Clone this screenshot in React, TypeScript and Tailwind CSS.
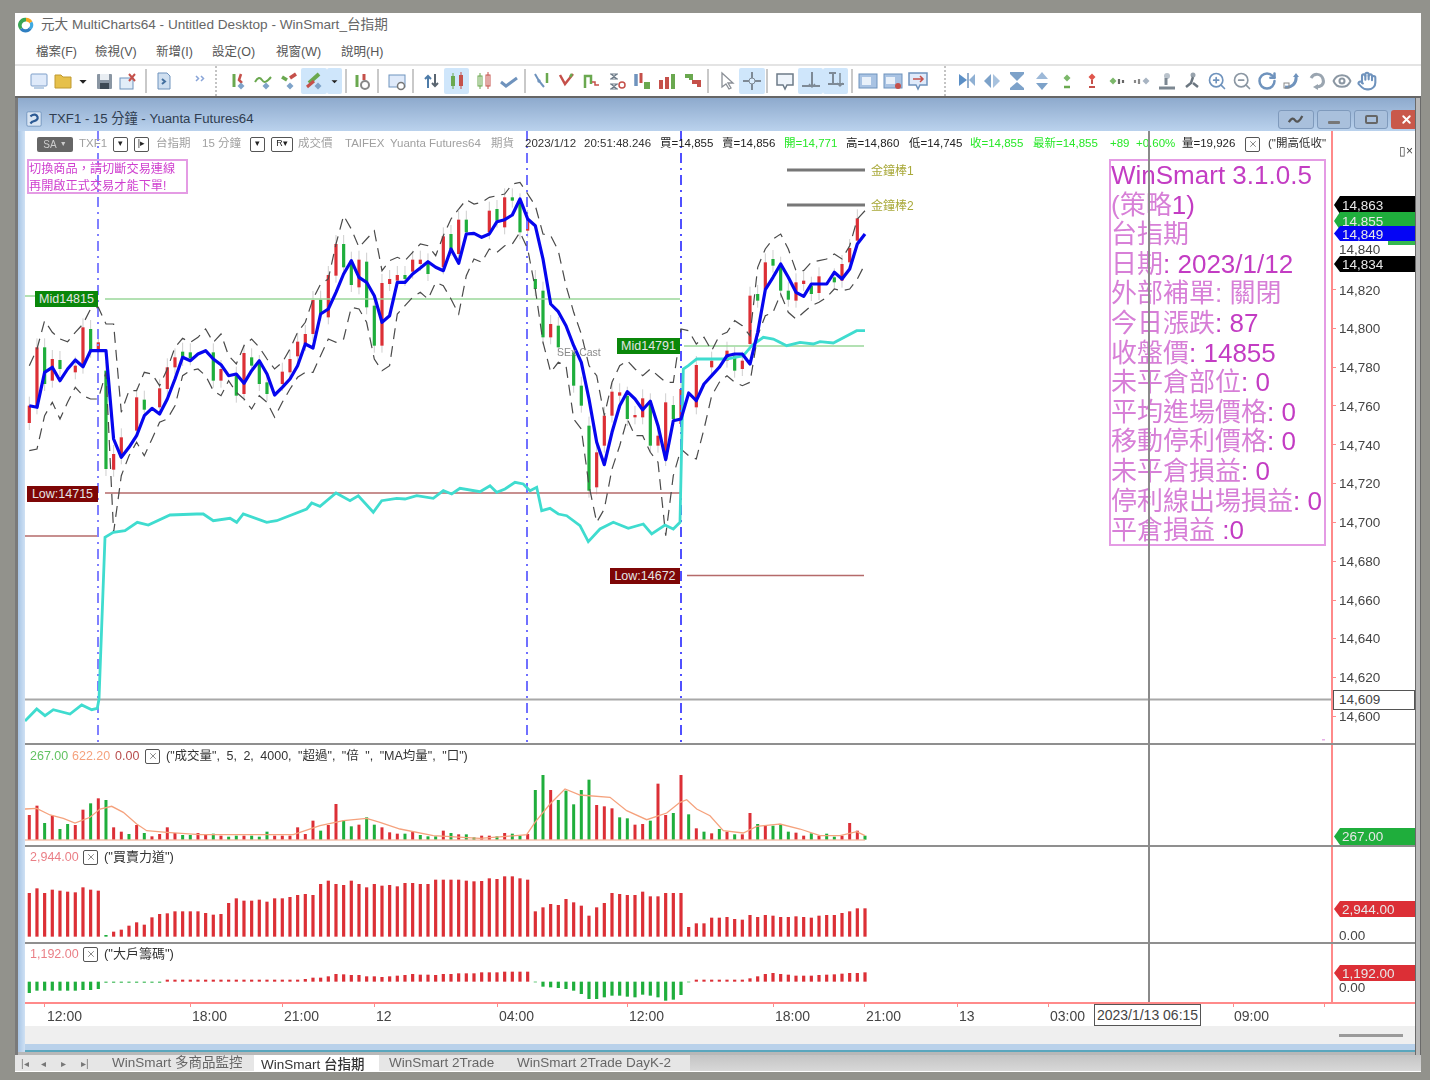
import React from "react";
import { Hand, Eye, RotateCw, ZoomIn, ZoomOut, X } from "lucide-react";

const RED = "#dc2f36";
const GREEN = "#1fae3c";
const BLUEGREY = "#6f93bd";

// bar x in page pixels
const bx = (i: number) => 29.3 + i * 7.667;
// values below were read off the 3x crops of the reference
const fromA = (z: number) => 200 + z / 3;
const fromB = (z: number) => 170 + z / 3;
const fromVol = (z: number) => 690 + z / 3;

const blueA = [620, 625, 520, 505, 545, 510, 483, 503, 455, 455, 455, 720, 775, 745, 710, 650, 628, 645, 600, 540, 475, 485, 465, 455, 480, 497, 530, 525, 553, 515, 485, 525, 588, 565, 540, 500, 435, 447, 345, 330, 280, 225, 185, 235, 250, 290, 370, 350, 250, 250, 225, 207, 188, 205, 215, 150, 193, 105, 103];
const blueB = [205, 195, 158, 152, 138, 90, 150, 170, 270, 405, 428, 470, 530, 580, 690, 820, 887, 790, 710, 668, 690, 722, 697, 770, 872, 755, 750, 672, 695, 645, 620, 595, 560, 555, 555, 585, 490, 362, 325, 285, 325, 370, 382, 345, 345, 345, 310, 330, 300, 225, 195];
const upA = [500, 450, 365, 400, 420, 428, 400, 375, 330, 325, 375, 375, 640, 575, 575, 520, 525, 560, 510, 445, 418, 430, 415, 390, 430, 405, 470, 495, 440, 420, 445, 480, 510, 490, 450, 400, 370, 300, 255, 240, 135, 50, 90, 145, 120, 95, 215, 185, 175, 185, 160, 135, 140, 170, 110, 60, 30, 2, 15];
const upB = [100, 85, 80, 75, 45, 40, 75, 110, 195, 200, 245, 350, 430, 495, 590, 620, 740, 640, 590, 575, 600, 620, 600, 620, 640, 640, 480, 485, 525, 505, 545, 500, 490, 455, 470, 500, 295, 240, 210, 195, 240, 305, 305, 280, 275, 270, 255, 270, 230, 150, 125];
const lowA = [755, 750, 650, 610, 660, 610, 565, 590, 600, 600, 520, 1000, 830, 770, 730, 770, 720, 670, 660, 620, 530, 515, 510, 530, 575, 590, 545, 580, 600, 630, 590, 610, 655, 610, 570, 535, 520, 520, 470, 420, 430, 420, 325, 330, 370, 480, 515, 500, 345, 320, 295, 280, 300, 250, 260, 300, 345, 230, 180];
const lowB = [280, 240, 250, 230, 225, 190, 240, 360, 520, 610, 580, 590, 750, 780, 950, 1060, 1020, 900, 830, 750, 800, 800, 850, 880, 1100, 920, 840, 860, 870, 780, 680, 640, 620, 640, 650, 640, 500, 440, 430, 375, 430, 450, 430, 410, 400, 385, 360, 365, 360, 330, 285];

const series = (a: number[], b: number[]) =>
  [...a.map((z, i) => `${bx(i).toFixed(1)},${fromA(z).toFixed(1)}`), ...b.map((z, i) => `${bx(i + 59).toFixed(1)},${fromB(z).toFixed(1)}`)].join(" ");

const cyan = [
  [25, 722], [36.7, 710], [45, 716.7], [53.3, 710.7], [70, 715], [81.7, 706], [91.7, 710.7], [97.3, 709.3], [99, 700], [105, 538.3],
  [113.3, 533.3], [125, 531.7], [137.3, 523.3], [148.3, 526], [170, 516], [196.7, 515], [203.3, 515], [213.3, 521.7], [230, 519.3], [236.7, 523.3], [243.3, 515], [266.7, 523.3], [276.7, 521.7], [306.7, 510], [311.7, 504], [320, 507.3], [336, 494], [350, 501.7], [358.3, 496.7], [373.3, 513.3], [381.7, 501.7], [396.7, 499.3], [405, 500], [416.7, 496.7], [433.3, 499.3], [443.3, 491.7], [451.7, 495], [460, 489.3], [480, 492.7],
  [490, 486.7], [496.7, 493.3], [505, 490], [515, 483.3], [523.3, 485], [530, 491.7], [536.7, 488.3], [541.7, 511.7], [550, 509.3], [558.3, 515], [566.7, 516.7], [580, 526.7], [588.3, 542.7], [600, 530], [613.3, 523.3], [628.3, 529.3], [643.3, 525], [651.7, 535], [665, 526], [673.3, 530], [680, 523.3], [683.3, 370], [688.3, 366.7], [696.7, 360], [726.7, 360], [743.3, 356.7], [751.7, 346.7], [763.3, 338.3], [773.3, 340], [786.7, 346.7], [800, 343.3], [813.3, 345], [820, 342.7], [833.3, 344], [856.7, 331.7], [865, 331.7],
].map((p) => p.join(",")).join(" ");

// candles: index, body top, body bottom, green?  (crop units)
const candlesA: [number, number, number, 0 | 1][] = [
  [0, 620, 672, 0], [1, 445, 625, 0], [2, 445, 555, 1], [3, 480, 545, 0], [4, 483, 510, 1], [6, 500, 520, 0], [7, 385, 503, 0], [8, 390, 455, 1], [9, 430, 455, 0], [10, 515, 810, 1], [11, 765, 812, 0], [12, 715, 775, 0], [14, 595, 695, 0], [15, 602, 632, 1], [17, 568, 625, 0], [18, 505, 570, 0], [19, 475, 505, 0], [20, 458, 480, 1], [21, 460, 478, 1], [24, 460, 545, 1], [25, 510, 545, 0], [27, 530, 590, 1], [28, 462, 585, 0], [29, 475, 500, 1], [30, 495, 555, 1], [31, 550, 585, 1], [33, 518, 555, 0], [34, 480, 520, 0], [35, 428, 472, 0], [36, 405, 435, 0], [37, 303, 405, 0], [38, 302, 345, 1], [39, 228, 355, 0], [40, 135, 230, 0], [41, 135, 205, 1], [42, 185, 258, 1], [43, 182, 265, 0], [44, 188, 325, 1], [45, 320, 440, 1], [46, 252, 440, 0], [47, 240, 255, 0], [48, 228, 245, 0], [49, 228, 240, 1], [50, 182, 218, 0], [51, 182, 195, 0], [52, 190, 225, 1], [54, 112, 205, 0], [55, 105, 150, 1], [56, 62, 165, 0], [57, 62, 100, 1],
];
const candlesB: [number, number, number, 0 | 1][] = [
  [60, 125, 190, 0], [61, 120, 155, 1], [62, 85, 175, 0], [63, 85, 95, 1], [64, 100, 190, 1], [65, 150, 185, 0], [66, 330, 360, 1], [67, 365, 505, 1], [68, 465, 505, 0], [69, 470, 535, 1], [71, 550, 650, 1], [72, 650, 710, 1], [73, 770, 965, 1], [74, 850, 955, 0], [75, 740, 830, 0], [76, 668, 740, 0], [77, 670, 680, 0], [78, 680, 750, 1], [79, 738, 745, 0], [80, 688, 745, 0], [81, 700, 830, 1], [82, 800, 830, 0], [83, 700, 870, 0], [84, 708, 750, 1], [85, 660, 765, 0], [87, 588, 715, 0], [89, 575, 595, 0], [91, 545, 575, 0], [92, 560, 605, 1], [93, 575, 600, 0], [94, 380, 525, 0], [95, 375, 395, 1], [96, 280, 360, 0], [97, 270, 290, 1], [98, 290, 365, 1], [99, 365, 392, 1], [100, 340, 395, 0], [101, 335, 345, 0], [102, 350, 375, 1], [103, 322, 372, 0], [105, 325, 340, 1], [106, 285, 335, 0], [107, 237, 280, 0], [108, 148, 215, 0],
];
const allCandles = [
  ...candlesA.map(([i, t, b, g]) => ({ i, t: fromA(t), b: fromA(b), g })),
  ...candlesB.map(([i, t, b, g]) => ({ i, t: fromB(t), b: fromB(b), g })),
];

const volColors = "rrgrggrrgrgrrgrgrrrrggrrgrggrgggrrrrrrgrrggrggrrrgrgggrgrggrrgrggrggrgggggrrrggrrgrrgrgrgrgrgrrgrgggrrgrggrrrg";
const volTop = [378, 350, 402, 380, 420, 405, 408, 362, 343, 328, 333, 415, 428, 435, 408, 432, 442, 435, 415, 432, 438, 438, 432, 435, 434, 440, 443, 440, 440, 440, 443, 428, 440, 440, 440, 415, 435, 395, 425, 408, 345, 395, 412, 407, 385, 407, 415, 430, 434, 434, 428, 438, 442, 442, 425, 432, 436, 436, 445, 440, 440, 442, 432, 434, 440, 435, 303, 258, 303, 333, 305, 346, 303, 272, 348, 352, 358, 385, 388, 407, 405, 395, 284, 378, 372, 258, 376, 418, 428, 433, 420, 428, 436, 436, 372, 405, 408, 410, 405, 428, 431, 440, 433, 440, 434, 443, 440, 402, 425, 440];
const volMa = "75,360 110,358 150,378 190,388 225,402 270,385 300,360 335,352 370,370 410,405 440,425 500,430 600,437 800,437 880,437 960,410 1030,395 1100,388 1140,400 1200,420 1300,440 1440,448 1580,437 1605,400 1650,345 1695,300 1740,318 1830,325 1880,365 1940,392 2000,372 2040,340 2060,332 2090,360 2130,380 2170,425 2230,432 2270,412 2340,405 2400,420 2460,440 2520,440 2570,428 2595,440"
  .split(" ").map((p) => { const [x, y] = p.split(",").map(Number); return `${(x / 3).toFixed(1)},${fromVol(y).toFixed(1)}`; }).join(" ");
const forceTop = [612, 598, 612, 602, 605, 608, 610, 595, 602, 605, 738, 728, 722, 710, 700, 707, 685, 675, 673, 667, 667, 667, 667, 672, 677, 675, 642, 628, 635, 635, 632, 638, 628, 628, 624, 618, 615, 618, 585, 575, 585, 588, 575, 585, 595, 585, 590, 588, 592, 582, 582, 585, 585, 572, 572, 572, 572, 575, 577, 576, 568, 570, 562, 562, 568, 572, 667, 655, 645, 648, 630, 640, 650, 680, 655, 642, 612, 615, 618, 618, 608, 622, 622, 612, 612, 612, 714, 703, 703, 686, 686, 684, 690, 692, 678, 684, 678, 680, 684, 684, 682, 684, 686, 680, 678, 678, 672, 667, 658, 658];
const bigHand = [912, 905, 905, 905, 905, 905, 905, 903, 903, 900, 881, 881, 881, 881, 881, 881, 881, 881, 872, 872, 872, 872, 872, 872, 872, 872, 872, 872, 872, 872, 872, 872, 872, 872, 872, 872, 870, 866, 866, 862, 855, 856, 858, 858, 862, 862, 864, 862, 860, 858, 855, 857, 857, 858, 855, 855, 853, 853, 853, 850, 850, 850, 848, 848, 848, 848, 880, 893, 895, 897, 900, 905, 915, 930, 930, 925, 920, 920, 923, 925, 917, 920, 925, 935, 932, 918, 880, 872, 872, 872, 872, 872, 872, 872, 868, 862, 855, 852, 855, 857, 860, 860, 860, 858, 857, 856, 854, 852, 852, 850];

const Ico = ({ children }: { children: React.ReactNode }) => (
  <svg viewBox="0 0 20 20" className="w-5 h-5 block" fill="none">{children}</svg>
);
const Diamond = ({ x, y, c = "#7fa3c9" }: { x: number; y: number; c?: string }) => (
  <path d={`M${x} ${y - 3.5}l3.5 3.5-3.5 3.5-3.5-3.5z`} fill={c} />
);
const S = (p: { d: string; c: string; w?: number; f?: string }) => (
  <path d={p.d} stroke={p.c} strokeWidth={p.w ?? 1.5} fill={p.f ?? "none"} />
);
const R = "#c5504a";
const G = "#6aa84f";
const B = BLUEGREY;
const D = "#6d7b88";

const icons: Record<string, React.ReactNode> = {
  win: <><rect x="2" y="3" width="16" height="12" rx="1" fill="#dfeafa" stroke="#7e9fc9" /><S d="M5 17h10" c="#a5bfdd" /></>,
  folder: <path d="M2 4h6l2 2h8v11H2z" fill="#e6c04a" stroke="#c09a30" />,
  caret: <path d="M6 9h8l-4 4z" fill="#222" />,
  save: <><rect x="3" y="3" width="15" height="15" rx="1" fill="#8a96a3" /><rect x="6" y="3" width="9" height="6" fill="#e8edf2" /><rect x="6" y="12" width="9" height="6" fill="#3d4954" /></>,
  exportx: <><rect x="2" y="7" width="13" height="11" fill="#e2edf8" stroke={B} /><S d="M11 3l6 7M17 3l-6 7" c={R} w={2} /></>,
  script: <><path d="M4 2h9l3 3v13H4z" fill="#cfdff0" stroke={B} /><S d="M8 8l3 2.5-3 2.5" c="#45709f" w={2} /></>,
  more: <><S d="M4 5l2.5 2.5L4 10M9 5l2.5 2.5L9 10" c="#8aa5d8" /></>,
  c1: <><S d="M6 3v13" c={G} w={3} /><S d="M13 3l-2 6 3 3" c={R} w={2.5} /><Diamond x={13} y={15} /></>,
  c2: <><S d="M1 11c3-5 5-5 7-2s4 3 9-3" c={G} w={2} /><Diamond x={12} y={15} /></>,
  c3: <><S d="M3 6l5 3" c={G} w={3.5} /><S d="M11 7l6-4" c={R} w={3.5} /><Diamond x={11} y={15} /></>,
  c4: <><S d="M5 12L15 3" c={G} w={4} /><S d="M3 16l7-6" c={R} w={3} /><Diamond x={14} y={15} /></>,
  c5: <><S d="M5 4v12" c={G} w={3} /><S d="M12 3v6" c={R} w={3} /><circle cx="13" cy="14" r="4" stroke="#888" strokeWidth="2" /></>,
  wingear: <><rect x="2" y="4" width="16" height="12" fill="#dfeafa" stroke={B} /><circle cx="14" cy="15" r="3.5" fill="#fff" stroke="#777" strokeWidth="1.5" /></>,
  arrows: <><S d="M6 17V5M3 8l3-3 3 3" c="#4d7ba8" w={2} /><S d="M13 3v12M10 12l3 3 3-3" c="#5a6570" w={2} /></>,
  candles: <><rect x="4" y="5" width="4" height="10" fill={G} /><S d="M6 2v16" c={G} w={1} /><rect x="12" y="4" width="4" height="11" fill={R} /><S d="M14 1v17" c={R} w={1} /></>,
  hollow: <><rect x="4" y="5" width="4" height="10" stroke={G} /><S d="M6 2v16" c={G} w={1} /><rect x="12" y="4" width="4" height="11" stroke={R} /><S d="M14 1v17" c={R} w={1} /></>,
  check: <S d="M2 11l5 4 11-8" c={B} w={3} />,
  v1: <><S d="M3 3l4 7 5 6" c={B} w={2} /><S d="M15 2v10" c={G} w={2.5} /><circle cx="7" cy="10" r="1.7" fill={B} /></>,
  v2: <><S d="M3 4l5 9 8-10" c={R} w={2.5} /><S d="M15 3l-2 3" c={G} w={2.5} /></>,
  steps: <><S d="M3 17V5h6v8" c={G} w={2.5} /><S d="M10 11h3v3h4" c={R} w={1.5} /></>,
  boxes: <><S d="M3 3h8M3 8h8M3 13h8M3 18h8M4 3l6 5M10 3L4 8M4 13l6 5M10 13l-6 5" c={D} w={1.2} /><circle cx="15" cy="14" r="3" stroke={R} strokeWidth="1.5" /></>,
  mix: <><S d="M4 3v12" c={B} w={3.5} /><S d="M9 2v10" c={R} w={3} /><rect x="12" y="11" width="6" height="7" fill={G} /></>,
  blocks: <><rect x="2" y="9" width="4" height="9" fill={R} /><rect x="8" y="6" width="4" height="12" fill={R} /><rect x="14" y="3" width="4" height="15" fill={G} /></>,
  diag: <><S d="M3 5h6v4" c={G} w={4} /><S d="M10 11h7v5" c={R} w={4} /></>,
  cursor: <path d="M6 2v14l4-3 3 5 2-1-3-5h5z" fill="#fff" stroke="#8a8f96" strokeWidth="1.3" />,
  cross: <><S d="M10 1v18M1 10h18" c="#7e8a96" w={2} /><circle cx="10" cy="10" r="3" fill="#dbeeff" stroke="#7e8a96" /></>,
  bubble: <path d="M2 3h16v11h-6l-2 4-2-4H2z" fill="#eef4fb" stroke={D} strokeWidth="1.5" />,
  tdown: <><S d="M11 1v15M1 15h18" c="#7e8a96" w={2} /><S d="M8 13l3 3 3-3" c="#7e8a96" /></>,
  tdown2: <><S d="M3 2h7M7 2v10M2 13h16" c="#7e8a96" w={2} /><S d="M14 2v13M11 12l3 3 3-3" c="#7e8a96" /></>,
  wb1: <><rect x="1" y="3" width="18" height="14" fill="#a9c3e3" stroke={B} /><rect x="4" y="6" width="9" height="8" fill="#e9f1fa" /></>,
  wb2: <><rect x="1" y="3" width="18" height="14" fill="#a9c3e3" stroke={B} /><rect x="3" y="6" width="9" height="7" fill="#e9f1fa" /><circle cx="15" cy="15" r="3" fill={R} /></>,
  wb3: <><path d="M1 2h18v12h-7l-2 4-2-4H1z" fill="#dfeafa" stroke={B} strokeWidth="1.5" /><S d="M5 8h10M12 5l3 3-3 3" c={R} /></>,
  n1: <><path d="M2 3l8 6-8 6z" fill="#5b8fc6" /><S d="M11 2v15" c="#6f93bd" /><path d="M18 3l-6 6 6 6z" fill="#8fb0d3" /></>,
  n2: <><path d="M9 3L2 10l7 7z" fill="#7da2c9" /><path d="M11 3l7 7-7 7z" fill="#a8c2de" /></>,
  n3: <><path d="M3 1h14v2l-7 7-7-7z" fill="#7da2c9" /><path d="M3 19h14v-2l-7-6-7 6z" fill="#7da2c9" /></>,
  n4: <><path d="M10 1l6 7H4z" fill="#9db9d8" /><path d="M10 19l6-7H4z" fill="#7da2c9" /></>,
  n5: <><Diamond x={10} y={7} c="#7cb86a" /><S d="M7 16h6" c={G} w={2.5} /></>,
  n6: <><Diamond x={10} y={6} c="#e0564c" /><S d="M10 9v4M7 16h6" c={R} w={2} /></>,
  n7: <><Diamond x={6} y={10} c="#7cb86a" /><S d="M12 8v5M16 9v3" c="#666" w={2.2} /></>,
  n8: <><S d="M3 9v3M7 8v5" c="#888" w={2.2} /><Diamond x={14} y={10} c="#a8b4c2" /></>,
  f1: <><circle cx="10" cy="5" r="3" fill="#b9c2cb" /><S d="M9 7v7M2 17h16" c="#7c8791" w={3} /></>,
  f2: <><circle cx="11" cy="4" r="2.5" fill="#98a3ad" /><S d="M11 6l-2 6-5 4M11 12l5 4" c="#6b7680" w={2.5} /></>,
  f3: <><S d="M3 16c6 1 12-3 11-11" c="#6f93bd" w={3} /><path d="M11 6l3-4 3 4z" fill="#6f93bd" /><rect x="2" y="12" width="5" height="5" stroke="#888" /></>,
  f4: <><S d="M4 7c3-5 10-5 12 1s-3 8-7 8" c="#9aa5b0" w={3} /><path d="M11 13v6l-5-3z" fill="#9aa5b0" /></>,
};

type Tool = { k?: string; cls: string; on?: boolean; sep?: boolean };
const leftTools: Tool[] = [
  { k: "win", cls: "w-[26px]" }, { k: "folder", cls: "w-[22px]" }, { k: "caret", cls: "w-[18px]" }, { k: "save", cls: "w-[24px]" }, { k: "exportx", cls: "w-[24px]" },
  { sep: true, cls: "ml-[5px] mr-[5px]" }, { k: "script", cls: "w-[24px]" }, { k: "more", cls: "ml-[14px] w-[24px]" },
];
const midTools: Tool[] = [
  { k: "c1", cls: "w-[25px]" }, { k: "c2", cls: "w-[27px]" }, { k: "c3", cls: "w-[23px]" },
  { k: "c4", cls: "w-[26px] ml-[1px]", on: true }, { k: "caret", cls: "w-[15px]", on: true },
  { sep: true, cls: "mx-[3px]" }, { k: "c5", cls: "w-[24px]" }, { sep: true, cls: "ml-[3px] mr-[6px]" }, { k: "wingear", cls: "w-[24px]" }, { sep: true, cls: "mx-[3px]" },
  { k: "arrows", cls: "w-[24px] ml-[3px]" }, { k: "candles", cls: "w-[25px]", on: true }, { k: "hollow", cls: "w-[26px] ml-[2px]" }, { k: "check", cls: "w-[24px]" }, { sep: true, cls: "mx-[3px]" },
  { k: "v1", cls: "w-[25px]" }, { k: "v2", cls: "w-[25px]" }, { k: "steps", cls: "w-[25px]" }, { k: "boxes", cls: "w-[25px]" }, { k: "mix", cls: "w-[25px]" }, { k: "blocks", cls: "w-[25px]" }, { k: "diag", cls: "w-[25px]" },
  { sep: true, cls: "mx-[3px]" }, { k: "cursor", cls: "w-[27px]" }, { k: "cross", cls: "w-[26px]", on: true },
  { sep: true, cls: "ml-[1px] mr-[3px]" }, { k: "bubble", cls: "w-[27px]" }, { k: "tdown", cls: "w-[25px]", on: true }, { k: "tdown2", cls: "w-[25px]", on: true },
  { sep: true, cls: "mx-[3px]" }, { k: "wb1", cls: "w-[24px]" }, { k: "wb2", cls: "w-[26px]" }, { k: "wb3", cls: "w-[24px]" },
];
const rightTools = ["n1", "n2", "n3", "n4", "n5", "n6", "n7", "n8", "f1", "f2"];

function ToolRow({ items }: { items: Tool[] }) {
  return (
    <>
      {items.map((t, i) =>
        t.sep ? (
          <span key={i} className={`w-[2px] h-[24px] bg-[#c9c9c9] ${t.cls}`} />
        ) : (
          <span key={i} className={`h-[26px] flex items-center justify-center rounded-[2px] ${t.cls} ${t.on ? "bg-[#cfe6fb]" : ""}`}>
            <Ico>{icons[t.k as string]}</Ico>
          </span>
        )
      )}
    </>
  );
}

const statusTail: { t: string; w: string; c: string }[] = [
  { t: "成交價", w: "w-[47px]", c: "text-[#a0a0a0]" },
  { t: "TAIFEX", w: "w-[45px]", c: "text-[#a0a0a0]" },
  { t: "Yuanta Futures64", w: "w-[101px]", c: "text-[#a0a0a0]" },
  { t: "期貨", w: "w-[34px]", c: "text-[#a0a0a0]" },
  { t: "2023/1/12", w: "w-[59px]", c: "text-[#333]" },
  { t: "20:51:48.246", w: "w-[76px]", c: "text-[#333]" },
  { t: "買=14,855", w: "w-[62px]", c: "text-[#222]" },
  { t: "賣=14,856", w: "w-[62px]", c: "text-[#222]" },
  { t: "開=14,771", w: "w-[62px]", c: "text-[#28e828]" },
  { t: "高=14,860", w: "w-[63px]", c: "text-[#222]" },
  { t: "低=14,745", w: "w-[61px]", c: "text-[#222]" },
  { t: "收=14,855", w: "w-[63px]", c: "text-[#28e828]" },
  { t: "最新=14,855", w: "w-[77px]", c: "text-[#28e828]" },
  { t: "+89", w: "w-[26px]", c: "text-[#28e828]" },
  { t: "+0.60%", w: "w-[46px]", c: "text-[#28e828]" },
  { t: "量=19,926", w: "w-[63px]", c: "text-[#222]" },
];

const CloseBox = () => (
  <span className="w-[15px] h-[15px] flex items-center justify-center border border-[#555] rounded-[2px] shrink-0">
    <X className="w-[10px] h-[10px] text-[#444]" strokeWidth={1.5} />
  </span>
);
const MiniBtn = ({ label, cls }: { label: string; cls: string }) => (
  <span className={`h-[15px] flex items-center justify-center border border-[#555] rounded-[2px] text-[9px] text-[#222] shrink-0 ${cls}`}>{label}</span>
);

// CJK part is drawn thin in the reference, the numbers come out stronger
const info: [string, string][] = [
  ["", "WinSmart 3.1.0.5"], ["(策略", "1)"], ["台指期", ""], ["日期", ": 2023/1/12"], ["外部補單: 關閉", ""], ["今日漲跌", ": 87"], ["收盤價", ": 14855"],
  ["未平倉部位", ": 0"], ["平均進場價格", ": 0"], ["移動停利價格", ": 0"], ["未平倉損益", ": 0"], ["停利線出場損益", ": 0"], ["平倉損益", " :0"],
];

const prices = ["14,820", "14,800", "14,780", "14,760", "14,740", "14,720", "14,700", "14,680", "14,660", "14,640", "14,620", "14,600"];

const timeLabels: { t: string; x: number }[] = [
  { t: "12:00", x: 47 }, { t: "18:00", x: 192 }, { t: "21:00", x: 284 }, { t: "12", x: 376 }, { t: "04:00", x: 499 }, { t: "12:00", x: 629 },
  { t: "18:00", x: 775 }, { t: "21:00", x: 866 }, { t: "13", x: 959 }, { t: "03:00", x: 1050 }, { t: "09:00", x: 1234 },
];
const timeTicks = [44, 190, 282, 374, 497, 627, 773, 864, 957, 1048, 1233, 1324];

const Tag = ({ label, cls }: { label: string; cls: string }) => (
  <div className={`absolute left-[1px] right-0 flex items-center pl-[8px] pt-[2px] text-[13.5px] text-[#e8e8e8] overflow-hidden [clip-path:polygon(0_50%,6px_0,100%_0,100%_100%,6px_100%)] ${cls}`}>{label}</div>
);
const PlotTag = ({ label, cls }: { label: string; cls: string }) => (
  <div className={`absolute h-[16px] flex items-center justify-center text-[12.5px] leading-none text-[#e5e5e5] ${cls}`}>{label}</div>
);

export default function App() {
  return (
    <div className="w-[1430px] h-[1080px] bg-[#92928c] pt-[13px] pl-[15px] overflow-hidden [font-family:'Liberation_Sans','Noto_Sans_CJK_TC',sans-serif]">
      <div className="w-[1406px] h-[1059px] flex flex-col bg-white blur-[0.6px]">
        {/* app title */}
        <div className="h-[24px] flex items-center pl-[2px] gap-[6px] shrink-0">
          <svg viewBox="0 0 20 20" className="w-[18px] h-[18px]">
            <path d="M10 2a8 8 0 0 1 7 4l-3 2a4.500 4.500 0 0 0-4-2z" fill="#f5a623" />
            <path d="M17 6a8 8 0 0 1-1 9l-3-2a4 4 0 0 0 1-5z" fill="#3fa9e0" />
            <path d="M16 15a8 8 0 0 1-13 0l3-2a4.500 4.500 0 0 0 7 0z" fill="#2f7fc1" />
            <path d="M3 15A8 8 0 0 1 10 2v4a4.500 4.500 0 0 0-4 7z" fill="#3aa655" />
          </svg>
          <span className="text-[13.6px] text-[#666]">元大 MultiCharts64 - Untitled Desktop - WinSmart_台指期</span>
        </div>
        {/* menu */}
        <div className="h-[27px] flex items-center pl-[21px] pt-[3px] text-[12.5px] text-[#555] shrink-0">
          <span className="w-[59px]">檔案(F)</span>
          <span className="w-[61px]">檢視(V)</span>
          <span className="w-[56px]">新增(I)</span>
          <span className="w-[64px]">設定(O)</span>
          <span className="w-[65px]">視窗(W)</span>
          <span>說明(H)</span>
        </div>
        {/* toolbars */}
        <div className="h-[32px] flex items-center border-t-2 border-[#e4e4e4] pl-[11px] shrink-0">
          <ToolRow items={leftTools} />
          <span className="w-[2px] h-[30px] ml-[1px] mr-[8px] border-l-2 border-dotted border-[#c4c4c4]" />
          <ToolRow items={midTools} />
          <span className="w-[2px] h-[30px] ml-[14px] mr-[8px] border-l-2 border-dotted border-[#c4c4c4]" />
          {rightTools.map((k) => (
            <span key={k} className="w-[25px] h-[26px] flex items-center justify-center"><Ico>{icons[k]}</Ico></span>
          ))}
          <span className="w-[25px] h-[26px] flex items-center justify-center"><ZoomIn className="w-5 h-5 text-[#6f93bd]" /></span>
          <span className="w-[25px] h-[26px] flex items-center justify-center"><ZoomOut className="w-5 h-5 text-[#8b97a3]" /></span>
          <span className="w-[25px] h-[26px] flex items-center justify-center"><RotateCw className="w-5 h-5 text-[#6f93bd]" strokeWidth={3} /></span>
          <span className="w-[25px] h-[26px] flex items-center justify-center"><Ico>{icons.f3}</Ico></span>
          <span className="w-[25px] h-[26px] flex items-center justify-center"><Ico>{icons.f4}</Ico></span>
          <span className="w-[25px] h-[26px] flex items-center justify-center"><Eye className="w-5 h-5 text-[#8b97a3]" strokeWidth={2.5} /></span>
          <span className="w-[25px] h-[26px] flex items-center justify-center"><Hand className="w-5 h-5 text-[#6f93bd]" strokeWidth={2.5} /></span>
        </div>
        <div className="h-[2px] bg-[#666] shrink-0" />

        {/* MDI area */}
        <div className="flex h-[957px] shrink-0 bg-[#b0b0b0]">
          <div className="w-[3px] bg-[#7a7a7a]" />
          <div className="w-[1397px] flex flex-col">
            {/* child window title */}
            <div className="h-[33px] shrink-0 flex items-center pl-[7px] pt-[9px] bg-gradient-to-b from-[#8eaacd] to-[#bad2ed]">
              <svg viewBox="0 0 20 20" className="w-[18px] h-[18px] mr-[6px]">
                <rect x="2" y="2" width="16" height="16" rx="1.500" fill="#d9e5f3" stroke="#6f93bd" />
                <path d="M6 7c4-3 7-2 8 1s-3 4-6 5l-2 2" stroke="#2c5a94" strokeWidth="2.500" fill="none" />
              </svg>
              <span className="text-[13.2px] text-[#2f3d50]">TXF1 - 15 分鐘 - Yuanta Futures64</span>
              <div className="ml-auto flex gap-[3px] h-[19px]">
                <span className="w-[36px] flex items-center justify-center rounded-[3px] border border-[#7f9abc] bg-[#a9c0dc]">
                  <svg viewBox="0 0 20 12" className="w-[18px] h-[11px]"><path d="M2 9c3-5 5-5 7-2s5 1 8-5" stroke="#555" strokeWidth="2.500" fill="none" /></svg>
                </span>
                <span className="w-[34px] flex items-end justify-center pb-[4px] rounded-[3px] border border-[#7f9abc] bg-[#a9c0dc]"><span className="w-[12px] h-[3px] bg-[#777] rounded-[1px]" /></span>
                <span className="w-[34px] flex items-center justify-center rounded-[3px] border border-[#7f9abc] bg-[#a9c0dc]"><span className="w-[13px] h-[9px] border-2 border-[#666] rounded-[2px]" /></span>
                <span className="w-[24px] flex items-center justify-end pr-[2px] rounded-l-[3px] bg-[#c9584a]"><X className="w-[13px] h-[13px] text-white" strokeWidth={3.5} /></span>
              </div>
            </div>
            <div className="flex h-[921px] shrink-0">
              <div className="w-[7px] bg-gradient-to-r from-[#a9c6e6] to-[#cfe1f4]" />
              <div className="w-[1390px] flex flex-col bg-white relative">
                {/* crosshair vertical */}
                <div className="absolute left-[1123px] top-0 w-[2px] h-[871px] bg-[#8a8a8a] z-20" />

                {/* main pane */}
                <div className="flex h-[612px] shrink-0">
                  <div className="relative w-[1306px] h-full overflow-hidden">
                    <svg viewBox="25 132 1306 612" className="block w-full h-full">
                      {allCandles.map((c) => (
                        <g key={c.i}>
                          <line x1={bx(c.i)} x2={bx(c.i)} y1={c.t - 9} y2={c.b + 7} stroke="#cfcfcf" strokeWidth="1" />
                          <rect x={bx(c.i) - 1.6} y={c.t} width="3.200" height={c.b - c.t} fill={c.g ? GREEN : RED} />
                        </g>
                      ))}
                      <line x1="25" x2="35" y1="297" y2="297" stroke="#9ad79a" strokeWidth="1.500" />
                      <line x1="105" x2="680" y1="300" y2="300" stroke="#9ad79a" strokeWidth="1.500" />
                      <line x1="684" x2="864" y1="347" y2="347" stroke="#9ad79a" strokeWidth="1.500" />
                      <line x1="105" x2="680" y1="494" y2="494" stroke="#b56a6a" strokeWidth="1.500" />
                      <line x1="25" x2="98" y1="537" y2="537" stroke="#b56a6a" strokeWidth="1.500" />
                      <line x1="687" x2="864" y1="576.500" y2="576.500" stroke="#b56a6a" strokeWidth="1.500" />
                      <line x1="25" x2="1331" y1="700.500" y2="700.500" stroke="#a8a8a8" strokeWidth="2" />
                      <line x1="98" x2="98" y1="132" y2="744" stroke="#8080ff" strokeWidth="2" strokeDasharray="10 5 2 5" />
                      <line x1="527" x2="527" y1="132" y2="744" stroke="#7070ff" strokeWidth="2" strokeDasharray="10 5 2 5" />
                      <line x1="681" x2="681" y1="132" y2="744" stroke="#5050ff" strokeWidth="2" strokeDasharray="10 5 2 5" />
                      <line x1="787" x2="865" y1="171" y2="171" stroke="#777" strokeWidth="3" />
                      <line x1="787" x2="865" y1="206" y2="206" stroke="#777" strokeWidth="3" />
                      <polyline points={series(upA, upB)} fill="none" stroke="#4a4a4a" strokeWidth="1.200" strokeDasharray="11 7" />
                      <polyline points={series(lowA, lowB)} fill="none" stroke="#4a4a4a" strokeWidth="1.200" strokeDasharray="11 7" />
                      <polyline points={cyan} fill="none" stroke="#3fdccf" strokeWidth="2.800" />
                      <polyline points={series(blueA, blueB)} fill="none" stroke="#0606ee" strokeWidth="3.200" strokeLinejoin="round" />
                      <rect x="1322" y="740" width="3" height="1.500" fill="#e8b0e8" />
                    </svg>

                    {/* legend row */}
                    <div className="absolute top-[1px] left-0 w-full h-[24px] flex items-center pl-[12px] text-[11.5px] whitespace-nowrap overflow-hidden">
                      <span className="w-[36px] h-[15px] shrink-0 flex items-center justify-center gap-[3px] bg-[#666] rounded-[2px] text-[10px] text-[#ccc]">SA<span className="text-[7px]">▼</span></span>
                      <span className="w-[34px] ml-[6px] shrink-0 text-[#a0a0a0]">TXF1</span>
                      <MiniBtn label="▾" cls="w-[15px]" />
                      <MiniBtn label="|▸" cls="w-[15px] ml-[6px]" />
                      <span className="w-[46px] ml-[7px] shrink-0 text-[#a0a0a0]">台指期</span>
                      <span className="w-[48px] shrink-0 text-[#a0a0a0]">15 分鐘</span>
                      <MiniBtn label="▾" cls="w-[15px]" />
                      <MiniBtn label="R▾" cls="w-[22px] ml-[6px] mr-[5px]" />
                      {statusTail.map((s) => <span key={s.t} className={`${s.w} shrink-0 ${s.c}`}>{s.t}</span>)}
                      <CloseBox />
                      <span className="ml-[8px] text-[#333]">("開高低收"</span>
                    </div>

                    {/* warning box */}
                    <div className="absolute left-[2px] top-[28px] w-[161px] h-[35px] border-2 border-[#e49be4] text-[12.2px] leading-[17px] text-[#cf3fcf] whitespace-nowrap overflow-hidden">
                      <div>切換商品，請切斷交易連線</div>
                      <div>再開啟正式交易才能下單!</div>
                    </div>

                    <PlotTag label="Mid14815" cls="left-[10px] top-[160px] w-[63px] bg-[#0a870a]" />
                    <PlotTag label="Low:14715" cls="left-[2px] top-[355px] w-[71px] bg-[#7e0606]" />
                    <PlotTag label="Mid14791" cls="left-[592px] top-[207px] w-[63px] bg-[#0a870a]" />
                    <PlotTag label="Low:14672" cls="left-[585px] top-[437px] w-[70px] bg-[#7e0606]" />
                    <span className="absolute left-[532px] top-[214px] text-[10.5px] text-[#8a8a8a]">SEx Cast</span>
                    <span className="absolute left-[846px] top-[31px] text-[12px] text-[#a9a93a]">金鐘棒1</span>
                    <span className="absolute left-[846px] top-[66px] text-[12px] text-[#a9a93a]">金鐘棒2</span>

                    {/* info panel */}
                    <div className="absolute left-[1084px] top-[28px] w-[217px] h-[387px] border-2 border-[#e49be4] text-[26px] leading-[29.6px] text-[#c33cc3] whitespace-nowrap overflow-hidden">
                      {info.map(([cjk, rest]) => (
                        <div key={cjk + rest}><span className="text-[#d77fd7]">{cjk}</span>{rest}</div>
                      ))}
                    </div>
                  </div>

                  {/* price scale */}
                  <div className="relative w-[84px] h-full border-l-2 border-[#ff8a8a] text-[#444] text-[13.5px] leading-none">
                    <span className="absolute left-[66px] top-[14px] text-[12px] text-[#444]">▯×</span>
                    <span className="absolute left-[55px] top-[110px] w-[27px] h-[4px] bg-[#35b84f]" />
                    <Tag label="14,863" cls="top-[65px] h-[18px] bg-black" />
                    <Tag label="14,855" cls="top-[81px] h-[18px] bg-[#1fae3c]" />
                    <Tag label="14,849" cls="top-[95px] h-[15px] bg-[#0505f5]" />
                    <span className="absolute left-[6px] top-[112px]">14,840</span>
                    <Tag label="14,834" cls="top-[125px] h-[16px] bg-black" />
                    {prices.map((p, i) => (
                      <span key={p} className="absolute left-[6px]" style={{ top: 152.5 + i * 38.75 }}>{p}</span>
                    ))}
                    {prices.map((p, i) => (
                      <span key={p} className="absolute left-0 w-[3px] h-[1px] bg-[#ff8a8a]" style={{ top: 158 + i * 38.82 }} />
                    ))}
                    <div className="absolute left-0 right-0 top-[559px] h-[20px] border border-[#555] bg-white pl-[5px] flex items-center">14,609</div>
                  </div>
                </div>
                <div className="h-[2px] bg-[#8f8f8f] shrink-0" />

                {/* volume pane */}
                <div className="flex h-[100px] shrink-0">
                  <div className="relative w-[1306px] h-full">
                    <svg viewBox="25 746 1306 100" className="block w-full h-full">
                      {volTop.map((z, i) => (
                        <rect key={i} x={bx(i) - 1.500} y={fromVol(z)} width="3" height={(452 - z) / 3} fill={volColors[i] === "g" ? GREEN : RED} />
                      ))}
                      <polyline points={volMa} fill="none" stroke="#f5a27d" strokeWidth="1.300" />
                      <line x1="25" x2="865" y1="841" y2="841" stroke="#f0a080" strokeWidth="1" />
                    </svg>
                    <div className="absolute top-[1px] left-[5px] h-[20px] flex items-center text-[12.5px] whitespace-nowrap">
                      <span className="w-[36px] text-[#62c262]">267.00</span>
                      <span className="w-[36px] ml-[6px] text-[#f5a27d]">622.20</span>
                      <span className="ml-[7px] w-[23px] text-[#b84c4c]">0.00</span>
                      <span className="ml-[7px]"><CloseBox /></span>
                      <span className="ml-[6px] text-[#333] [word-spacing:3px]">("成交量", 5, 2, 4000, "超過", "倍 ", "MA均量", "口")</span>
                    </div>
                  </div>
                  <div className="relative w-[84px] h-full border-l-2 border-[#ff8a8a] overflow-hidden">
                    <Tag label="267.00" cls="top-[83px] h-[17px] bg-[#1fae3c]" />
                  </div>
                </div>
                <div className="h-[2px] bg-[#8f8f8f] shrink-0" />

                {/* buy/sell pane */}
                <div className="flex h-[95px] shrink-0">
                  <div className="relative w-[1306px] h-full">
                    <svg viewBox="25 848 1306 95" className="block w-full h-full">
                      {forceTop.map((z, i) => (
                        <rect key={i} x={bx(i) - 1.600} y={fromVol(z)} width="3.200" height={(743 - z) / 3} fill={i === 10 ? GREEN : RED} />
                      ))}
                    </svg>
                    <div className="absolute top-0 left-[5px] h-[20px] flex items-center text-[12.5px] whitespace-nowrap">
                      <span className="w-[46px] text-[#ea7f86]">2,944.00</span>
                      <span className="ml-[7px]"><CloseBox /></span>
                      <span className="ml-[6px] text-[#333] text-[13px]">("買賣力道")</span>
                    </div>
                  </div>
                  <div className="relative w-[84px] h-full border-l-2 border-[#ff8a8a] overflow-hidden text-[13.5px] leading-none text-[#444]">
                    <Tag label="2,944.00" cls="top-[54px] h-[16px] bg-[#dc2f36]" />
                    <span className="absolute left-[6px] top-[82px]">0.00</span>
                  </div>
                </div>
                <div className="h-[2px] bg-[#8f8f8f] shrink-0" />

                {/* big hands pane */}
                <div className="flex h-[58px] shrink-0">
                  <div className="relative w-[1306px] h-full">
                    <svg viewBox="25 945 1306 58" className="block w-full h-full">
                      {bigHand.map((z, i) => (
                        <rect key={i} x={bx(i) - 1.600} y={fromVol(Math.min(z, 878))} width="3.200" height={Math.abs(z - 878) / 3} fill={z > 878 ? GREEN : RED} />
                      ))}
                    </svg>
                    <div className="absolute top-0 left-[5px] h-[20px] flex items-center text-[12.5px] whitespace-nowrap">
                      <span className="w-[46px] text-[#ea7f86]">1,192.00</span>
                      <span className="ml-[7px]"><CloseBox /></span>
                      <span className="ml-[6px] text-[#333] text-[13px]">("大戶籌碼")</span>
                    </div>
                  </div>
                  <div className="relative w-[84px] h-full border-l-2 border-[#ff8a8a] overflow-hidden text-[13.5px] leading-none text-[#444]">
                    <Tag label="1,192.00" cls="top-[21px] h-[16px] bg-[#dc2f36]" />
                    <span className="absolute left-[6px] top-[37px]">0.00</span>
                  </div>
                </div>

                {/* time axis */}
                <div className="relative h-[24px] shrink-0 border-t-2 border-[#ff8a8a] text-[14px] text-[#444] leading-none">
                  {timeLabels.map((l) => (
                    <span key={l.t + l.x} className="absolute top-[5px]" style={{ left: l.x - 25 }}>{l.t}</span>
                  ))}
                  {timeTicks.map((x) => (
                    <span key={x} className="absolute top-0 w-[1px] h-[3px] bg-[#ff8a8a]" style={{ left: x - 25 }} />
                  ))}
                  <span className="absolute left-[1069px] top-0 w-[107px] h-[22px] flex items-center justify-center border border-[#555] text-[14px] bg-white z-30">2023/1/13 06:15</span>
                </div>
                <div className="flex-1 bg-[#efefef] flex items-center justify-end pr-[12px]">
                  <span className="w-[64px] h-[3px] bg-[#9a9a9a]" />
                </div>
                <div className="h-[8px] shrink-0 bg-[#b9d1ea] border-b-2 border-[#5aa6bd]" />
              </div>
            </div>
            <div className="h-[3px] bg-[#b8b8b8] shrink-0" />
          </div>
          <div className="w-[6px] bg-[#b9b9b9] border-x border-[#6a6a6a]" />
        </div>

        {/* sheet tabs */}
        <div className="h-[16px] flex items-center bg-gradient-to-b from-[#c4c4c4] to-[#d8d8d8] text-[13.5px] text-[#666] whitespace-nowrap shrink-0">
          <div className="w-[675px] h-full flex items-center pl-[6px] bg-[#e6e6e6]">
            <span className="w-[20px] text-[10px] text-[#777]">|◂</span>
            <span className="w-[20px] text-[10px] text-[#777]">◂</span>
            <span className="w-[20px] text-[10px] text-[#777]">▸</span>
            <span className="w-[26px] text-[10px] text-[#777]">▸|</span>
            <span className="w-[132px] ml-[5px]">WinSmart 多商品監控</span>
            <span className="w-[125px] h-full ml-[10px] pl-[7px] bg-white text-[#333] font-medium">WinSmart 台指期</span>
            <span className="w-[128px] ml-[10px]">WinSmart 2Trade</span>
            <span>WinSmart 2Trade DayK-2</span>
          </div>
        </div>
      </div>
    </div>
  );
}
